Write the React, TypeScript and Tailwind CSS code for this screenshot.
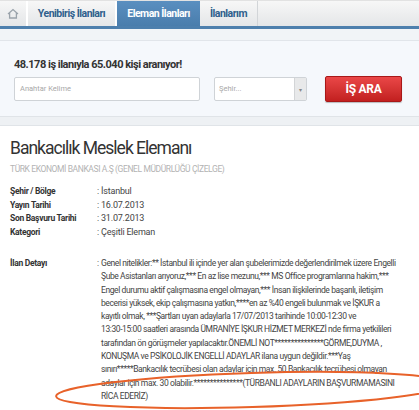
import React from "react";

const info = [
  ["Şehir / Bölge", "İstanbul"],
  ["Yayın Tarihi", "16.07.2013"],
  ["Son Başvuru Tarihi", "31.07.2013"],
  ["Kategori", "Çeşitli Eleman"],
];

const detail = [
  "Genel nitelikler:** İstanbul ili içinde yer alan şubelerimizde değerlendirilmek üzere Engelli",
  "Şube Asistanları arıyoruz,*** En az lise mezunu,*** MS Office programlarına hakim,***",
  "Engel durumu aktif çalışmasına engel olmayan,*** İnsan ilişkilerinde başarılı, iletişim",
  "becerisi yüksek, ekip çalışmasına yatkın,****en az %40 engeli bulunmak ve İŞKUR a",
  "kayıtlı olmak, ***Şartları uyan adaylarla 17/07/2013 tarihinde 10:00-12:30 ve",
  "13:30-15:00 saatleri arasında ÜMRANİYE İŞKUR HİZMET MERKEZİ nde firma yetkilileri",
  "tarafından ön görüşmeler yapılacaktır.ÖNEMLİ NOT***************GÖRME,DUYMA ,",
  "KONUŞMA ve PSİKOLOJİK ENGELLİ ADAYLAR ilana uygun değildir.***Yaş",
  "sınırı*****Bankacılık tecrübesi olan adaylar için max. 50 Bankacılık tecrübesi olmayan",
  "adaylar için max. 30 olabilir.***************(TÜRBANLI ADAYLARIN BAŞVURMAMASINI",
  "RİCA EDERİZ)",
];

function HomeIcon() {
  return (
    <svg width="12" height="11" viewBox="0 0 12 11" fill="none" stroke="#9aa3ab" strokeWidth="1.3">
      <path d="M1 6 L6 1.5 L11 6" />
      <path d="M2.6 5 V10 H9.4 V5" />
    </svg>
  );
}

export default function App() {
  return (
    <div className="relative w-[419px] h-[410px] overflow-hidden bg-white font-['Roboto',sans-serif]">
      {/* tabs */}
      <nav className="flex h-[26px] bg-gradient-to-b from-[#f7f7f7] to-[#e4e6e8] border-t border-[#e2e2e2] whitespace-nowrap">
        <div className="w-[28px] flex items-center justify-center border-r-2 border-white">
          <HomeIcon />
        </div>
        <div className="w-[89px] flex items-center justify-center border-r-2 border-white text-[10.5px] tracking-[-0.5px] font-bold text-[#2f5f8c]">
          Yenibiriş İlanları
        </div>
        <div className="w-[83px] flex items-center justify-center bg-gradient-to-b from-[#5a8fc0] to-[#4a7dac] text-[10.5px] tracking-[-0.5px] font-bold text-white">
          Eleman İlanları
        </div>
        <div className="w-[58px] flex items-center justify-center border-r border-[#d2d5d8] text-[10.5px] tracking-[-0.5px] font-bold text-[#2f5f8c]">
          İlanlarım
        </div>
        <div className="flex-1" />
      </nav>
      <div className="h-[3px] bg-[#4d7fad]" />
      <div className="h-[12px] bg-[#f1f4f7] border-b border-[#e1e5ea]" />

      {/* search */}
      <section className="bg-[#f5f8fc] px-[14px] pt-[16px] pb-[14px]">
        <p className="text-[11px] tracking-[-0.5px] font-bold text-[#333] leading-[16px]">
          48.178 iş ilanıyla 65.040 kişi aranıyor!
        </p>
        <div className="flex items-center mt-[3px]">
          <div className="w-[186px] h-[24px] bg-white border border-[#cfd3d7] rounded-[2px] flex items-center px-[5px] text-[7.5px] text-[#a8a8a8]">
            Anahtar Kelime
          </div>
          <div className="ml-[14px] w-[93px] h-[24px] bg-white border border-[#cfd3d7] rounded-[2px] flex">
            <div className="flex-1 flex items-center px-[4px] text-[7.5px] text-[#a8a8a8]">Şehir...</div>
            <div className="w-[12px] bg-[#e8e9ea] border-l border-[#d3d5d7] flex items-center justify-center text-[6px] text-[#888]">
              ▾
            </div>
          </div>
          <button className="ml-[18px] w-[77px] h-[26px] rounded-[2px] border border-[#a81818] bg-gradient-to-b from-[#ea4747] to-[#c21f1f] text-white text-[12px] tracking-[-0.3px] font-bold shadow-[0_1px_1px_rgba(0,0,0,0.25)]">
            İŞ ARA
          </button>
        </div>
      </section>
      <div className="h-[10px] bg-[#eef1f4] border-y border-[#e0e4e8]" />

      {/* content */}
      <main className="px-[10px] pt-[12px]">
        <h1 className="text-[17.5px] tracking-[-1px] leading-[21px] text-[#333]">Bankacılık Meslek Elemanı</h1>
        <p className="text-[8.5px] tracking-[-0.4px] leading-[12px] mt-[4px] text-[#b3b3b3] whitespace-nowrap">
          TÜRK EKONOMİ BANKASI A.Ş (GENEL MÜDÜRLÜĞÜ ÇİZELGE)
        </p>
        <dl className="mt-[10px] text-[9px] tracking-[-0.2px] leading-[13.5px] whitespace-nowrap">
          {info.map(([k, v]) => (
            <div key={k} className="flex">
              <dt className="w-[87px] shrink-0 font-bold text-[8.5px] tracking-[-0.3px] text-[#333]">{k}</dt>
              <dd className="text-[#444]">: {v}</dd>
            </div>
          ))}
          <div className="flex mt-[18px]">
            <dt className="w-[87px] shrink-0 font-bold text-[8.5px] tracking-[-0.3px] text-[#333]">İlan Detayı</dt>
            <dd className="flex text-[#444] text-[8.5px] tracking-[-0.4px] leading-[13.3px]">
              <span className="w-[4px] shrink-0">:</span>
              <div>
                {detail.map((l) => (
                  <div key={l}>{l}</div>
                ))}
              </div>
            </dd>
          </div>
        </dl>
      </main>

      {/* hand-drawn annotation */}
      <svg className="absolute left-0 top-0 pointer-events-none" width="419" height="410">
        <ellipse
          cx="252"
          cy="390"
          rx="196"
          ry="17"
          transform="rotate(-1.8 252 390)"
          fill="none"
          stroke="#e8622a"
          strokeWidth="2"
        />
      </svg>
    </div>
  );
}
